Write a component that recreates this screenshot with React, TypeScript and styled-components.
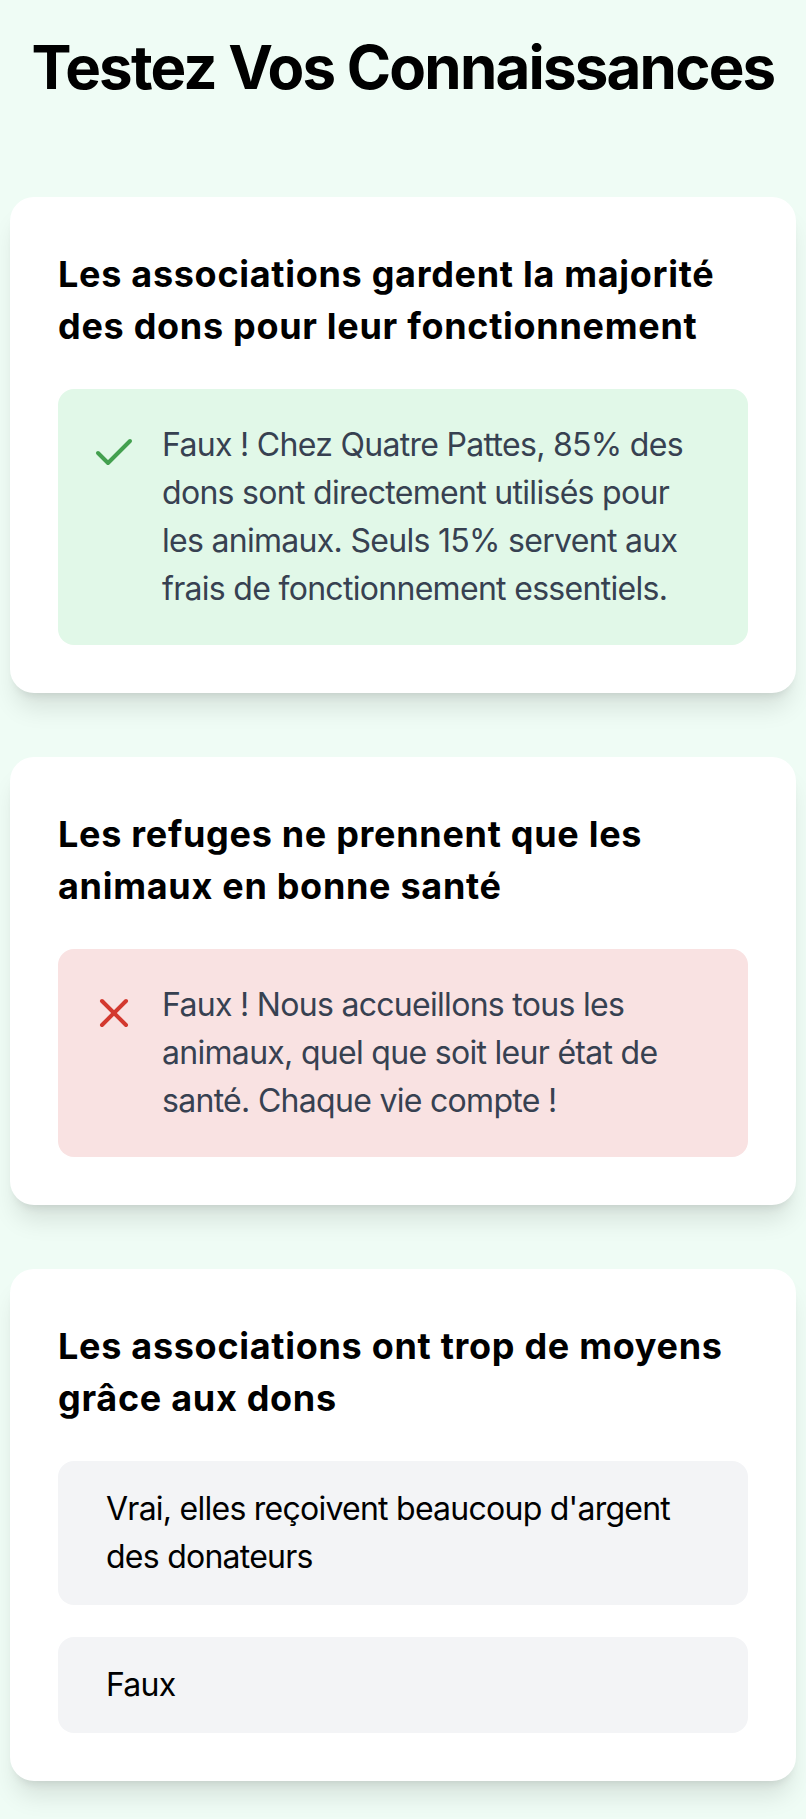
import React from "react";
import styled, { createGlobalStyle } from "styled-components";
import { Check, X } from "lucide-react";

const GlobalStyle = createGlobalStyle`
  * { box-sizing: border-box; }
  html, body { margin: 0; padding: 0; }
  body {
    background: #effcf5;
    font-family: Inter, "Noto Sans", "Liberation Sans", sans-serif;
    -webkit-font-smoothing: antialiased;
  }
`;

const Page = styled.main`
  padding: 37px 10px 38px;
  display: flex;
  flex-direction: column;
`;

const Title = styled.h1`
  margin: 0 0 100px;
  font-size: 60px;
  line-height: 60px;
  font-weight: 700;
  color: #000;
  text-align: center;
  letter-spacing: -1.8px;
`;

const List = styled.div`
  display: flex;
  flex-direction: column;
  gap: 64px;
`;

const Card = styled.section`
  background: #ffffff;
  border-radius: 24px;
  padding: 51px 48px 48px;
  box-shadow: 0 20px 25px -5px rgba(0, 0, 0, 0.1), 0 8px 10px -6px rgba(0, 0, 0, 0.1);
`;

const Question = styled.h2`
  margin: 0 0 37px;
  font-size: 36px;
  line-height: 52px;
  font-weight: 700;
  color: #000;
  letter-spacing: 0.7px;
`;

const Feedback = styled.div<{ $correct: boolean }>`
  display: flex;
  align-items: flex-start;
  gap: 24px;
  padding: 32px;
  border-radius: 16px;
  background: ${(p) => (p.$correct ? "#e1f8e8" : "#f9e2e2")};
`;

const IconWrap = styled.span<{ $correct: boolean }>`
  flex: none;
  display: flex;
  margin-top: 8px;
  color: ${(p) => (p.$correct ? "#43a04f" : "#d3392f")};
`;

const FeedbackText = styled.p`
  margin: 0;
  font-size: 32px;
  line-height: 48px;
  font-weight: 400;
  color: #374151;
  letter-spacing: -0.7px;
`;

const Options = styled.div`
  display: flex;
  flex-direction: column;
  gap: 32px;
`;

const Option = styled.button`
  display: block;
  width: 100%;
  text-align: left;
  border: none;
  margin: 0;
  padding: 24px 48px;
  border-radius: 16px;
  background: #f3f4f6;
  font-family: inherit;
  font-size: 32px;
  line-height: 48px;
  font-weight: 400;
  color: #000;
  letter-spacing: -0.75px;
  cursor: pointer;
`;

type Item =
  | { q: string; answered: true; correct: boolean; text: string }
  | { q: string; answered: false; options: string[] };

const items: Item[] = [
  {
    q: "Les associations gardent la majorité des dons pour leur fonctionnement",
    answered: true,
    correct: true,
    text: "Faux ! Chez Quatre Pattes, 85% des dons sont directement utilisés pour les animaux. Seuls 15% servent aux frais de fonctionnement essentiels.",
  },
  {
    q: "Les refuges ne prennent que les animaux en bonne santé",
    answered: true,
    correct: false,
    text: "Faux ! Nous accueillons tous les animaux, quel que soit leur état de santé. Chaque vie compte !",
  },
  {
    q: "Les associations ont trop de moyens grâce aux dons",
    answered: false,
    options: ["Vrai, elles reçoivent beaucoup d'argent des donateurs", "Faux"],
  },
];

export default function App() {
  return (
    <>
      <GlobalStyle />
      <Page>
        <Title>Testez Vos Connaissances</Title>
        <List>
          {items.map((item, i) => (
            <Card key={i}>
              <Question>{item.q}</Question>
              {item.answered ? (
                <Feedback $correct={item.correct}>
                  <IconWrap $correct={item.correct}>
                    {item.correct ? <Check size={48} strokeWidth={2} /> : <X size={48} strokeWidth={2} />}
                  </IconWrap>
                  <FeedbackText>{item.text}</FeedbackText>
                </Feedback>
              ) : (
                <Options>
                  {item.options.map((o) => (
                    <Option key={o} type="button">
                      {o}
                    </Option>
                  ))}
                </Options>
              )}
            </Card>
          ))}
        </List>
      </Page>
    </>
  );
}
